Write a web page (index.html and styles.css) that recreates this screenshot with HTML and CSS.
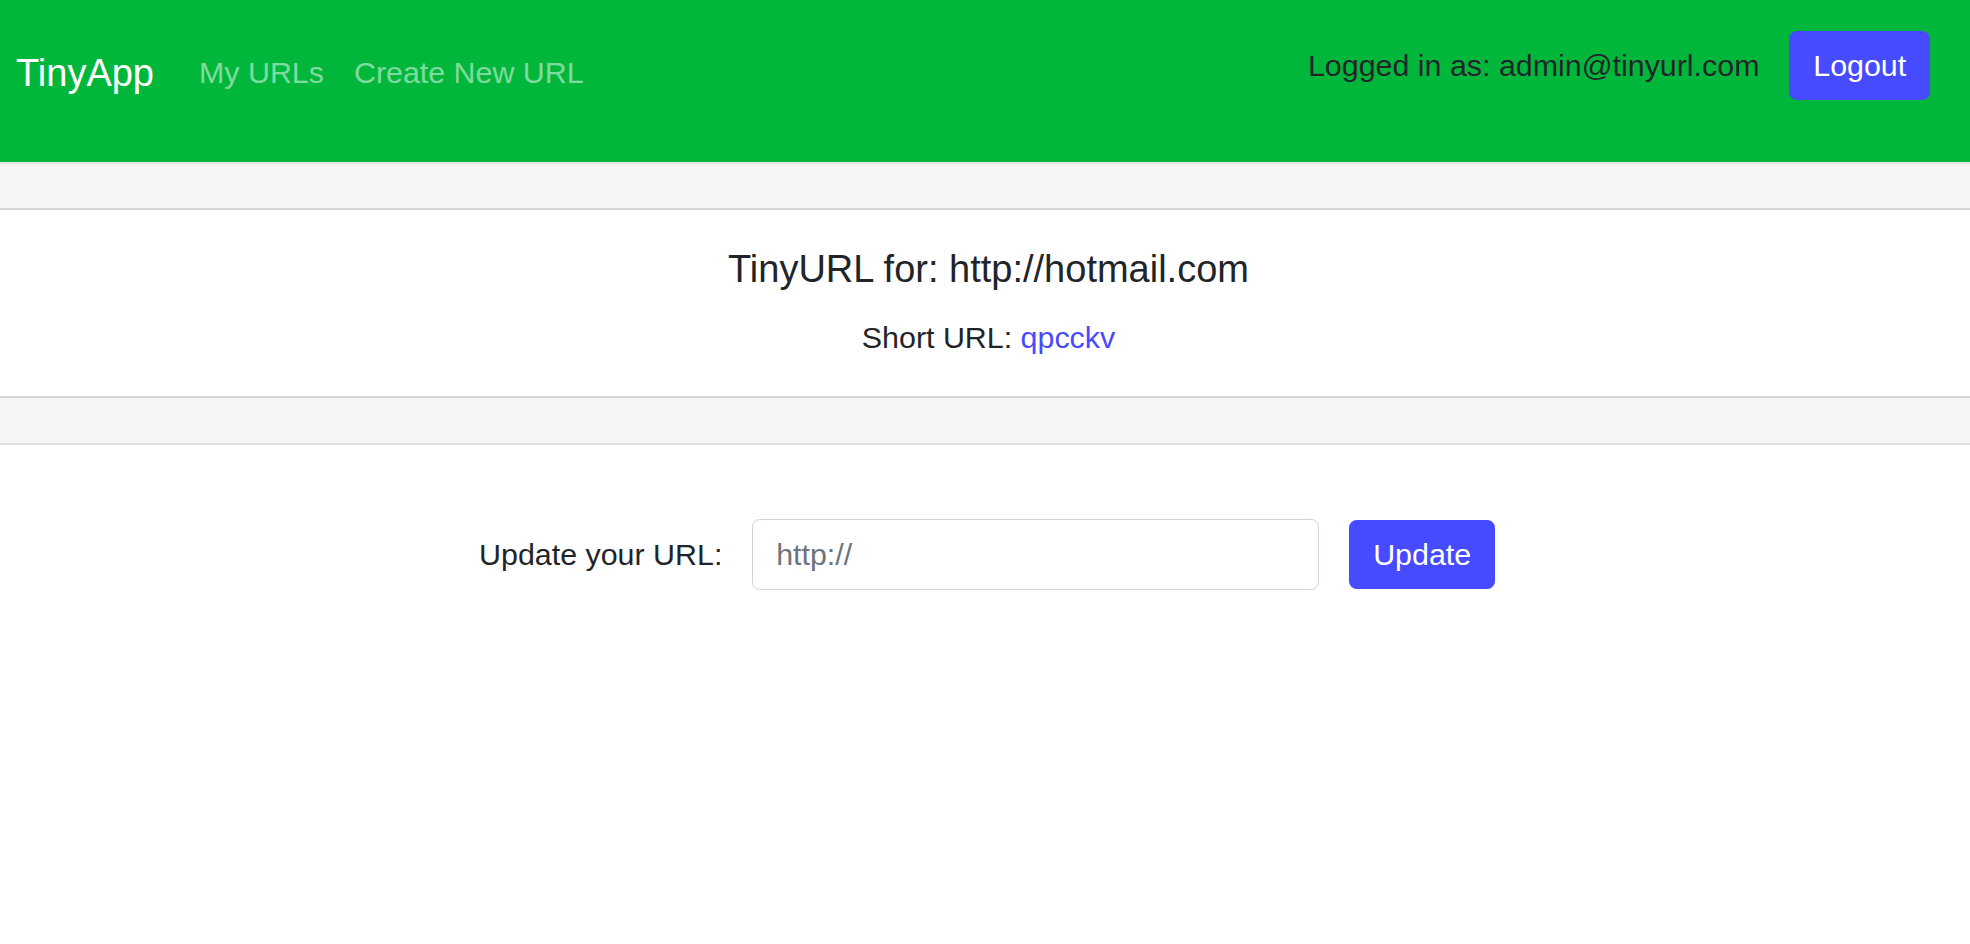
FILE: index.html
```html
<!DOCTYPE html>
<html lang="en">
<head>
<meta charset="utf-8">
<title>TinyApp</title>
<link rel="stylesheet" href="styles.css">
</head>
<body>
<nav class="navbar">
  <div class="nav-left">
    <a class="brand" href="#">TinyApp</a>
    <a class="nav-link" href="#">My URLs</a>
    <a class="nav-link" href="#">Create New URL</a>
  </div>
  <form class="nav-right">
    <span class="logged">Logged in as: admin@tinyurl.com</span>
    <button type="button" class="btn">Logout</button>
  </form>
</nav>
<div class="card">
  <div class="card-header"></div>
  <div class="card-body">
    <h5 class="card-title">TinyURL for: http://hotmail.com</h5>
    <p class="card-text">Short URL: <a class="short" href="#">qpcckv</a></p>
  </div>
  <div class="card-footer"></div>
</div>
<form class="update-form">
  <label class="update-label" for="longURL">Update your URL:</label>
  <input class="form-control" id="longURL" type="text" placeholder="http://">
  <button type="button" class="btn">Update</button>
</form>
</body>
</html>
```
FILE: styles.css
```css
* { box-sizing: border-box; }
html, body { margin: 0; padding: 0; }
body {
  font-family: "Liberation Sans", Arial, sans-serif;
  font-size: 30.4px;
  line-height: 45.6px;
  color: #212529;
  background: #fff;
}
a { text-decoration: none; }

.navbar {
  display: flex;
  align-items: flex-start;
  justify-content: space-between;
  height: 162px;
  background: #00b73c;
  padding: 0 40px 0 16px;
}
.nav-left {
  display: flex;
  align-items: flex-start;
  padding-top: 35px;
}
.brand {
  color: #fff;
  font-size: 38px;
  line-height: 57px;
  padding: 9.5px 0;
  margin-right: 30px;
}
.nav-link {
  color: rgba(255, 255, 255, 0.5);
  padding: 15px;
}
.nav-right {
  display: flex;
  align-items: center;
  gap: 30px;
  padding-top: 31px;
  margin: 0;
}
.logged { color: #212529; }

.btn {
  font-family: inherit;
  font-size: 30.4px;
  line-height: 45.6px;
  color: #fff;
  background: #474bff;
  border: 1.9px solid #474bff;
  border-radius: 7.6px;
  padding: 10.8px 22.8px;
  cursor: pointer;
}

.card {
  border-top: 2px solid #e4e4e4;
}
.card-header {
  height: 46px;
  background: #f6f6f6;
  border-bottom: 2px solid #d6d6d6;
}
.card-body {
  padding: 37px 37px 36px 44px;
  text-align: center;
}
.card-title {
  margin: 0 0 22px;
  font-size: 38px;
  line-height: 45.6px;
  font-weight: 500;
}
.card-text { margin: 0; }
.short { color: #474bff; }
.card-footer {
  height: 49px;
  background: #f6f6f6;
  border-top: 2px solid #d6d6d6;
  border-bottom: 2px solid #dedede;
}

.update-form {
  display: flex;
  justify-content: center;
  align-items: center;
  gap: 30px;
  padding-top: 74px;
  margin: 0 0 0 4px;
}
.update-label { color: #212529; }
.form-control {
  width: 567px;
  height: 71px;
  font-family: inherit;
  font-size: 30.4px;
  color: #495057;
  padding: 0 22.8px;
  border: 1.9px solid #ced4da;
  border-radius: 7.6px;
  background: #fff;
}
.form-control::placeholder { color: #6c757d; }
```
